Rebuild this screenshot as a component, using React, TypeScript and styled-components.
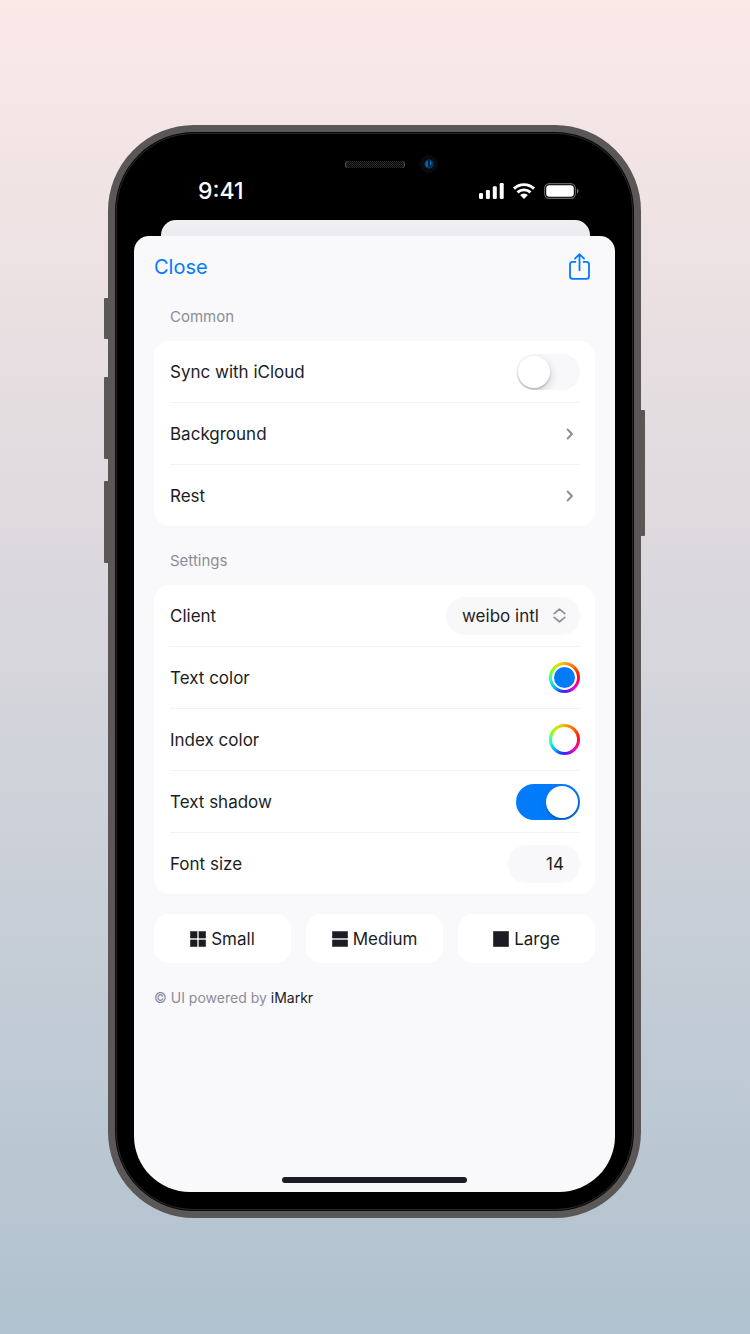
import React, { useState } from "react";
import styled, { createGlobalStyle, css } from "styled-components";

const ink = "#1c1d24";
const muted = "#8c8c99";
const accent = "#027bfb";
const canvas = "#f9f9fc";
const pill = "#f8f8fb";
const hairline = "#f3f3f6";

const GlobalStyle = createGlobalStyle`
  *, *::before, *::after { box-sizing: border-box; }
  body {
    margin: 0;
    color: ${ink};
    font-family: Inter, "Liberation Sans", sans-serif;
    font-size: 17px;
    line-height: 24px;
  }
  button, input, select {
    margin: 0;
    border: 0;
    padding: 0;
    color: inherit;
    font: inherit;
    background: none;
  }
  button, select { cursor: pointer; }
`;

const Page = styled.main`
  display: flex;
  justify-content: center;
  align-items: flex-start;
  min-height: 100vh;
  padding: 125px 16px 116px 15px;
  background: linear-gradient(#fbe9e8, #b0c2cf);
`;

const Phone = styled.div`
  position: relative;
  width: 100%;
  max-width: 533px;
  padding: 0 19px 19px;
  border: 7px solid #5b5757;
  border-radius: 86px;
  background: #000;
  box-shadow: inset 0 0 0 1px #0a0a0a, inset 0 0 0 2px #262626;
`;

const SideKey = styled.span<{ $side: "left" | "right"; $top: number; $length: number }>`
  position: absolute;
  top: ${(p) => p.$top}px;
  ${(p) => p.$side}: -11px;
  width: 4px;
  height: ${(p) => p.$length}px;
  border-radius: ${(p) => (p.$side === "left" ? "1px 0 0 1px" : "0 1px 1px 0")};
  background: #5b5757;
`;

const Sensors = styled.div`
  display: grid;
  grid-template-columns: 1fr auto 1fr;
  align-items: center;
  height: 42px;
  padding-top: 22px;
`;

const Speaker = styled.span`
  grid-column: 2;
  width: 60px;
  height: 7px;
  border-radius: 4px;
  background: repeating-conic-gradient(#2a2a2a 0 25%, #050505 0 50%) 0 0 / 2px 2px;
  box-shadow: inset 1px 0 #555, inset -1px 0 #555;
`;

const Camera = styled.span`
  display: grid;
  place-items: center;
  width: 18px;
  height: 18px;
  margin-left: 15px;
  border-radius: 50%;
  background: #0b0b0d;
`;

const StatusBar = styled.div`
  display: flex;
  align-items: center;
  justify-content: space-between;
  height: 34px;
  margin-bottom: 12px;
  padding: 0 36px 0 64px;
  color: #fff;
  font-size: 23px;
  font-weight: 500;
`;

const StatusIcons = styled.div`
  display: flex;
  align-items: center;
  gap: 9px;
`;

const BackSheet = styled.div`
  height: 16px;
  margin: 0 25px 0 27px;
  border-radius: 15px 15px 0 0;
  background: linear-gradient(#eff0f4, #ebebef);
`;

const Sheet = styled.section`
  display: flex;
  flex-direction: column;
  min-height: 956px;
  padding: 0 20px 9px;
  border-radius: 15px 15px 56px 56px;
  background: ${canvas};
`;

const Header = styled.header`
  display: flex;
  align-items: center;
  justify-content: space-between;
  height: 62px;
  padding-right: 5px;
`;

const TextButton = styled.button`
  color: ${accent};
  font-size: 20px;
`;

const IconButton = styled.button`
  display: flex;
  padding-bottom: 2px;
  color: ${accent};
`;

const Group = styled.section`
  & + & { margin-top: 16px; }
`;

const GroupTitle = styled.h2`
  margin: 0 0 6px;
  padding-left: 16px;
  color: ${muted};
  font-size: 15px;
  font-weight: 400;
  line-height: 37px;
`;

const Card = styled.div`
  padding: 0 15px 0 16px;
  border-radius: 15px;
  background: #fff;
`;

const rowStyle = css`
  display: flex;
  align-items: center;
  justify-content: space-between;
  width: 100%;
  height: 62px;
  border-bottom: 1px solid ${hairline};
  text-align: left;
  &:last-child {
    height: 61px;
    border-bottom: 0;
  }
`;

const Row = styled.label`${rowStyle}`;

const LinkRow = styled.button`
  ${rowStyle}
  && { border-bottom: 1px solid ${hairline}; }
  &&:last-child { border-bottom: 0; }
  padding-right: 6px;
`;

const Switch = styled.input`
  appearance: none;
  width: 64px;
  height: 36px;
  padding: 2px;
  border-radius: 18px;
  background: ${pill};
  overflow: hidden;
  cursor: pointer;
  &::before {
    content: "";
    display: block;
    width: 32px;
    height: 32px;
    border-radius: 50%;
    background: #fff;
    box-shadow: 0 2px 2px rgba(0, 0, 0, 0.18), 2px 3px 8px rgba(0, 0, 0, 0.12);
  }
  &:checked { background: ${accent}; }
  &:checked::before { margin-left: 28px; }
`;

const SelectWrap = styled.span`
  display: grid;
  align-items: center;
  width: 134px;
  > * { grid-area: 1 / 1; }
  > svg {
    justify-self: end;
    margin-right: 14px;
    pointer-events: none;
  }
`;

const Select = styled.select`
  appearance: none;
  width: 100%;
  height: 38px;
  padding: 0 32px 0 16px;
  border-radius: 19px;
  background: ${pill};
`;

const NumberField = styled.input`
  width: 72px;
  height: 38px;
  padding: 0 16px;
  border-radius: 19px;
  background: ${pill};
  text-align: right;
`;

const ColorWell = styled.input`
  appearance: none;
  width: 31px;
  height: 31px;
  padding: 3px;
  border-radius: 50%;
  background: conic-gradient(
    #ffae00, #ff6a00 40deg, #ff1500 80deg, #ff0090 115deg, #e800d8 140deg,
    #4a1cff 175deg, #2040ff 195deg, #00b4ff 225deg, #1cffc4 260deg,
    #8cff10 300deg, #d4e600 330deg, #ffae00
  );
  cursor: pointer;
  &::-webkit-color-swatch-wrapper { padding: 0; }
  &::-webkit-color-swatch {
    border: 2px solid #fff;
    border-radius: 50%;
  }
`;

const SizeButtons = styled.div`
  display: grid;
  grid-template-columns: repeat(3, 1fr);
  gap: 15px;
  margin-top: 20px;
`;

const SizeButton = styled.button`
  display: flex;
  align-items: center;
  justify-content: center;
  gap: 5px;
  height: 49px;
  border-radius: 15px;
  background: #fff;
`;

const Credit = styled.p`
  margin: 23px 0;
  color: ${muted};
  font-size: 14px;
  a {
    color: ${ink};
    text-decoration: none;
  }
`;

const HomeIndicator = styled.span`
  align-self: center;
  width: 185px;
  height: 6px;
  margin-top: auto;
  border-radius: 3px;
  background: ${ink};
`;

const SignalIcon = () => (
  <svg width="25" height="16" viewBox="0 0 25 16" fill="currentColor" aria-hidden="true">
    <rect x="0" y="10" width="4" height="6" rx="1.2" />
    <rect x="6.9" y="7" width="4" height="9" rx="1.2" />
    <rect x="13.8" y="3.3" width="4" height="12.7" rx="1.2" />
    <rect x="20.7" y="0" width="4" height="16" rx="1.2" />
  </svg>
);

const WifiIcon = () => (
  <svg width="22" height="16" viewBox="0 0 22 16" aria-hidden="true">
    <g fill="none" stroke="currentColor" strokeWidth="2.9">
      <path d="M1 5.6A14.6 14.6 0 0 1 21 5.6" />
      <path d="M4.5 9.4A9.6 9.6 0 0 1 17.5 9.4" />
    </g>
    <path d="M11 16L7.1 12A5.8 5.8 0 0 1 14.9 12Z" fill="currentColor" />
  </svg>
);

const BatteryIcon = () => (
  <svg width="35" height="16" viewBox="0 0 35 16" aria-hidden="true">
    <rect x=".6" y=".6" width="30.8" height="14.8" rx="4.6" fill="none" stroke="#666" strokeWidth="1.1" />
    <rect x="2.2" y="2.2" width="27.6" height="11.6" rx="3.2" fill="currentColor" />
    <path d="M33 5.6C35 6.4 35 9.6 33 10.4Z" fill="#777" />
  </svg>
);

const ShareIcon = () => (
  <svg width="21" height="27" viewBox="0 0 21 27" fill="none" stroke="currentColor" strokeWidth="1.8" strokeLinecap="round" strokeLinejoin="round" aria-hidden="true">
    <path d="M6.4 8.9H3.6A2.6 2.6 0 0 0 1 11.5V23.2A2.6 2.6 0 0 0 3.6 25.8H17.4A2.6 2.6 0 0 0 20 23.2V11.5A2.6 2.6 0 0 0 17.4 8.9H14.6" />
    <path d="M10.5 17.2V1.4M6 5.6L10.5 1.2L15 5.6" />
  </svg>
);

const ChevronIcon = () => (
  <svg width="8" height="12" viewBox="0 0 8 12" fill="none" stroke={muted} strokeWidth="1.9" strokeLinecap="round" strokeLinejoin="round" aria-hidden="true">
    <path d="M1.6 1.5L6 6L1.6 10.5" />
  </svg>
);

const UpDownIcon = () => (
  <svg width="13" height="15" viewBox="0 0 13 15" fill="none" stroke={muted} strokeWidth="1.7" strokeLinecap="round" strokeLinejoin="round" aria-hidden="true">
    <path d="M1.2 5.6L6.5 1.2L11.8 5.6M1.2 9.4L6.5 13.8L11.8 9.4" />
  </svg>
);

const LensIcon = () => (
  <svg width="10" height="10" viewBox="0 0 10 10" aria-hidden="true">
    <circle cx="5" cy="5" r="4.6" fill="#063762" />
    <path d="M3.8 1.4A4 4 0 0 0 3.8 8.6Z" fill="#0f6ab5" />
    <path d="M6.2 1.4A4 4 0 0 1 6.2 6.6Z" fill="#1680d0" />
    <path d="M4.2 1.5H5.6V7H4.2Z" fill="#02101f" />
  </svg>
);

const tiles = {
  Small: "M0 0H7V7H0ZM9 0H16V7H9ZM0 9H7V16H0ZM9 9H16V16H9Z",
  Medium: "M0 0H16V7H0ZM0 9H16V16H0Z",
  Large: "M0 0H16V16H0Z",
};

const TileIcon = ({ d }: { d: string }) => (
  <svg width="16" height="16" viewBox="-0.4 -0.4 16.8 16.8" fill={ink} stroke={ink} strokeWidth=".6" strokeLinejoin="round" aria-hidden="true">
    <path d={d} />
  </svg>
);

export default function App() {
  const [sync, setSync] = useState(false);
  const [shadow, setShadow] = useState(true);
  const [textColor, setTextColor] = useState("#027bfb");
  const [indexColor, setIndexColor] = useState("#ffffff");
  const [fontSize, setFontSize] = useState("14");

  return (
    <Page>
      <GlobalStyle />
      <Phone>
        <SideKey $side="left" $top={166} $length={41} />
        <SideKey $side="left" $top={245} $length={82} />
        <SideKey $side="left" $top={349} $length={82} />
        <SideKey $side="right" $top={278} $length={126} />
        <Sensors>
          <Speaker />
          <Camera><LensIcon /></Camera>
        </Sensors>
        <StatusBar>
          <time>9:41</time>
          <StatusIcons>
            <SignalIcon />
            <WifiIcon />
            <BatteryIcon />
          </StatusIcons>
        </StatusBar>
        <BackSheet />
        <Sheet>
          <Header>
            <TextButton type="button">Close</TextButton>
            <IconButton type="button" aria-label="Share"><ShareIcon /></IconButton>
          </Header>
          <Group>
            <GroupTitle>Common</GroupTitle>
            <Card>
              <Row>
                Sync with iCloud
                <Switch type="checkbox" role="switch" checked={sync} onChange={(e) => setSync(e.target.checked)} />
              </Row>
              <LinkRow type="button">Background<ChevronIcon /></LinkRow>
              <LinkRow type="button">Rest<ChevronIcon /></LinkRow>
            </Card>
          </Group>
          <Group>
            <GroupTitle>Settings</GroupTitle>
            <Card>
              <Row>
                Client
                <SelectWrap>
                  <Select defaultValue="weibo intl">
                    <option>weibo intl</option>
                  </Select>
                  <UpDownIcon />
                </SelectWrap>
              </Row>
              <Row>
                Text color
                <ColorWell type="color" value={textColor} onChange={(e) => setTextColor(e.target.value)} />
              </Row>
              <Row>
                Index color
                <ColorWell type="color" value={indexColor} onChange={(e) => setIndexColor(e.target.value)} />
              </Row>
              <Row>
                Text shadow
                <Switch type="checkbox" role="switch" checked={shadow} onChange={(e) => setShadow(e.target.checked)} />
              </Row>
              <Row>
                Font size
                <NumberField inputMode="numeric" value={fontSize} onChange={(e) => setFontSize(e.target.value)} />
              </Row>
            </Card>
          </Group>
          <SizeButtons>
            {Object.entries(tiles).map(([name, d]) => (
              <SizeButton type="button" key={name}>
                <TileIcon d={d} />
                {name}
              </SizeButton>
            ))}
          </SizeButtons>
          <Credit>
            © UI powered by <a href="#imarkr">iMarkr</a>
          </Credit>
          <HomeIndicator />
        </Sheet>
      </Phone>
    </Page>
  );
}
